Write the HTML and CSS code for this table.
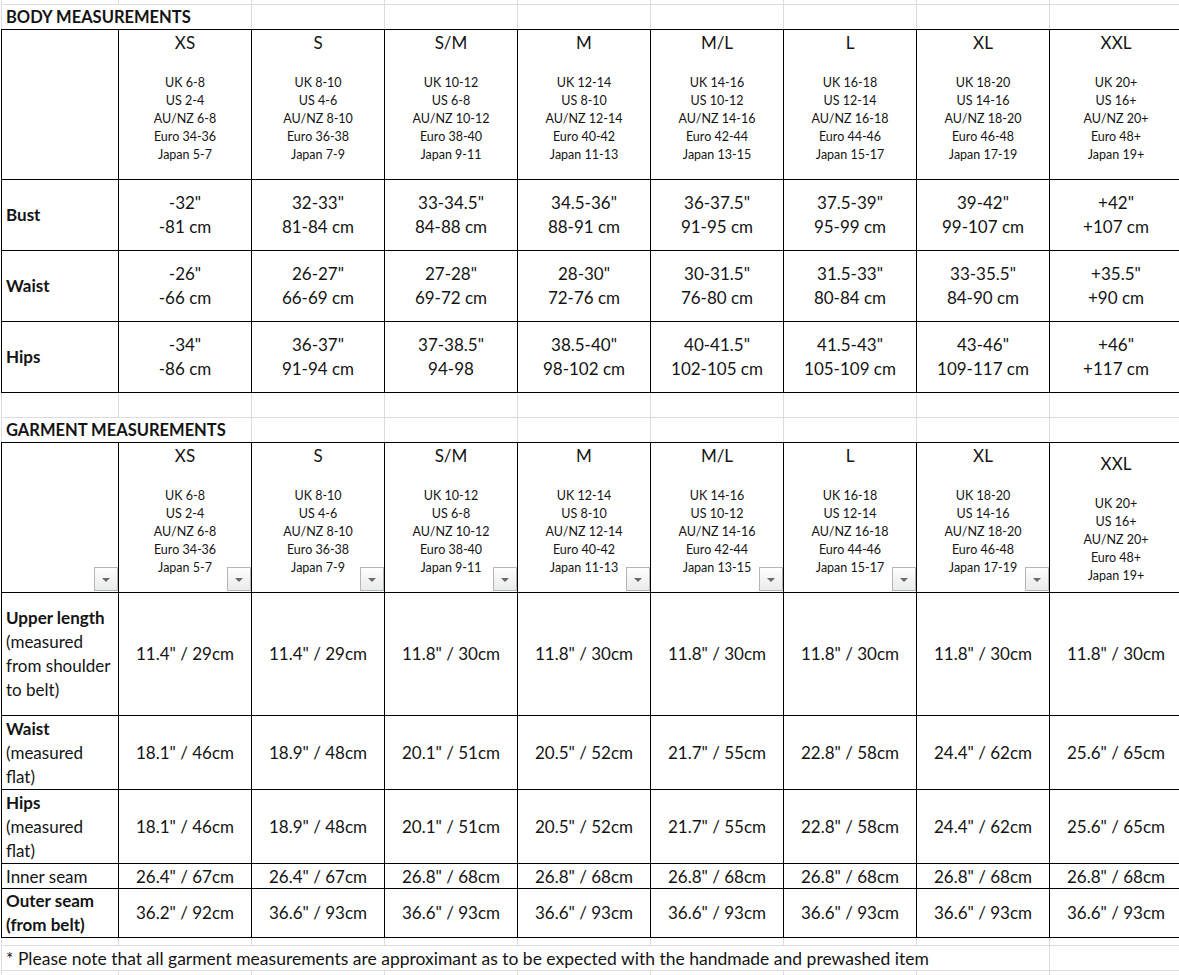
FILE: index.html
```html
<!DOCTYPE html>
<html lang="en">
<head>
<meta charset="utf-8">
<title>Size chart</title>
<link rel="stylesheet" href="styles.css">
</head>
<body>
<div class="sheet">
  <div class="row r-top"><div></div><div></div><div></div><div></div><div></div><div></div><div></div><div></div><div></div></div>
  <div class="row r-title"><div class="title">BODY MEASUREMENTS</div><div></div><div></div><div></div><div></div><div></div><div></div><div></div></div>

  <div class="table">
    <div class="row r-head">
      <div></div>
      <div class="hd"><div class="sz">XS</div><div class="ls">UK 6-8<br>US 2-4<br>AU/NZ 6-8<br>Euro 34-36<br>Japan 5-7</div></div>
      <div class="hd"><div class="sz">S</div><div class="ls">UK 8-10<br>US 4-6<br>AU/NZ 8-10<br>Euro 36-38<br>Japan 7-9</div></div>
      <div class="hd"><div class="sz">S/M</div><div class="ls">UK 10-12<br>US 6-8<br>AU/NZ 10-12<br>Euro 38-40<br>Japan 9-11</div></div>
      <div class="hd"><div class="sz">M</div><div class="ls">UK 12-14<br>US 8-10<br>AU/NZ 12-14<br>Euro 40-42<br>Japan 11-13</div></div>
      <div class="hd"><div class="sz">M/L</div><div class="ls">UK 14-16<br>US 10-12<br>AU/NZ 14-16<br>Euro 42-44<br>Japan 13-15</div></div>
      <div class="hd"><div class="sz">L</div><div class="ls">UK 16-18<br>US 12-14<br>AU/NZ 16-18<br>Euro 44-46<br>Japan 15-17</div></div>
      <div class="hd"><div class="sz">XL</div><div class="ls">UK 18-20<br>US 14-16<br>AU/NZ 18-20<br>Euro 46-48<br>Japan 17-19</div></div>
      <div class="hd"><div class="sz">XXL</div><div class="ls">UK 20+<br>US 16+<br>AU/NZ 20+<br>Euro 48+<br>Japan 19+</div></div>
    </div>
    <div class="row r-body">
      <div class="lb"><b>Bust</b></div>
      <div class="v">-32"<br>-81 cm</div>
      <div class="v">32-33"<br>81-84 cm</div>
      <div class="v">33-34.5"<br>84-88 cm</div>
      <div class="v">34.5-36"<br>88-91 cm</div>
      <div class="v">36-37.5"<br>91-95 cm</div>
      <div class="v">37.5-39"<br>95-99 cm</div>
      <div class="v">39-42"<br>99-107 cm</div>
      <div class="v">+42"<br>+107 cm</div>
    </div>
    <div class="row r-body">
      <div class="lb"><b>Waist</b></div>
      <div class="v">-26"<br>-66 cm</div>
      <div class="v">26-27"<br>66-69 cm</div>
      <div class="v">27-28"<br>69-72 cm</div>
      <div class="v">28-30"<br>72-76 cm</div>
      <div class="v">30-31.5"<br>76-80 cm</div>
      <div class="v">31.5-33"<br>80-84 cm</div>
      <div class="v">33-35.5"<br>84-90 cm</div>
      <div class="v">+35.5"<br>+90 cm</div>
    </div>
    <div class="row r-body">
      <div class="lb"><b>Hips</b></div>
      <div class="v">-34"<br>-86 cm</div>
      <div class="v">36-37"<br>91-94 cm</div>
      <div class="v">37-38.5"<br>94-98</div>
      <div class="v">38.5-40"<br>98-102 cm</div>
      <div class="v">40-41.5"<br>102-105 cm</div>
      <div class="v">41.5-43"<br>105-109 cm</div>
      <div class="v">43-46"<br>109-117 cm</div>
      <div class="v">+46"<br>+117 cm</div>
    </div>
  </div>

  <div class="row r-empty"><div></div><div></div><div></div><div></div><div></div><div></div><div></div><div></div><div></div></div>
  <div class="row r-title"><div class="title">GARMENT MEASUREMENTS</div><div></div><div></div><div></div><div></div><div></div><div></div><div></div></div>

  <div class="table">
    <div class="row r-head">
      <div class="hd"><span class="dd"></span></div>
      <div class="hd"><div class="sz">XS</div><div class="ls">UK 6-8<br>US 2-4<br>AU/NZ 6-8<br>Euro 34-36<br>Japan 5-7</div><span class="dd"></span></div>
      <div class="hd"><div class="sz">S</div><div class="ls">UK 8-10<br>US 4-6<br>AU/NZ 8-10<br>Euro 36-38<br>Japan 7-9</div><span class="dd"></span></div>
      <div class="hd"><div class="sz">S/M</div><div class="ls">UK 10-12<br>US 6-8<br>AU/NZ 10-12<br>Euro 38-40<br>Japan 9-11</div><span class="dd"></span></div>
      <div class="hd"><div class="sz">M</div><div class="ls">UK 12-14<br>US 8-10<br>AU/NZ 12-14<br>Euro 40-42<br>Japan 11-13</div><span class="dd"></span></div>
      <div class="hd"><div class="sz">M/L</div><div class="ls">UK 14-16<br>US 10-12<br>AU/NZ 14-16<br>Euro 42-44<br>Japan 13-15</div><span class="dd"></span></div>
      <div class="hd"><div class="sz">L</div><div class="ls">UK 16-18<br>US 12-14<br>AU/NZ 16-18<br>Euro 44-46<br>Japan 15-17</div><span class="dd"></span></div>
      <div class="hd"><div class="sz">XL</div><div class="ls">UK 18-20<br>US 14-16<br>AU/NZ 18-20<br>Euro 46-48<br>Japan 17-19</div><span class="dd"></span></div>
      <div class="hd hd-low"><div class="sz">XXL</div><div class="ls">UK 20+<br>US 16+<br>AU/NZ 20+<br>Euro 48+<br>Japan 19+</div></div>
    </div>
    <div class="row r-upper">
      <div class="lb"><div><b>Upper length</b><br>(measured<br>from shoulder<br>to belt)</div></div>
      <div class="v">11.4" / 29cm</div>
      <div class="v">11.4" / 29cm</div>
      <div class="v">11.8" / 30cm</div>
      <div class="v">11.8" / 30cm</div>
      <div class="v">11.8" / 30cm</div>
      <div class="v">11.8" / 30cm</div>
      <div class="v">11.8" / 30cm</div>
      <div class="v">11.8" / 30cm</div>
    </div>
    <div class="row r-flat">
      <div class="lb"><div><b>Waist</b><br>(measured<br>flat)</div></div>
      <div class="v">18.1" / 46cm</div>
      <div class="v">18.9" / 48cm</div>
      <div class="v">20.1" / 51cm</div>
      <div class="v">20.5" / 52cm</div>
      <div class="v">21.7" / 55cm</div>
      <div class="v">22.8" / 58cm</div>
      <div class="v">24.4" / 62cm</div>
      <div class="v">25.6" / 65cm</div>
    </div>
    <div class="row r-flat">
      <div class="lb"><div><b>Hips</b><br>(measured<br>flat)</div></div>
      <div class="v">18.1" / 46cm</div>
      <div class="v">18.9" / 48cm</div>
      <div class="v">20.1" / 51cm</div>
      <div class="v">20.5" / 52cm</div>
      <div class="v">21.7" / 55cm</div>
      <div class="v">22.8" / 58cm</div>
      <div class="v">24.4" / 62cm</div>
      <div class="v">25.6" / 65cm</div>
    </div>
    <div class="row r-inner">
      <div class="lb">Inner seam</div>
      <div class="v">26.4" / 67cm</div>
      <div class="v">26.4" / 67cm</div>
      <div class="v">26.8" / 68cm</div>
      <div class="v">26.8" / 68cm</div>
      <div class="v">26.8" / 68cm</div>
      <div class="v">26.8" / 68cm</div>
      <div class="v">26.8" / 68cm</div>
      <div class="v">26.8" / 68cm</div>
    </div>
    <div class="row r-outer">
      <div class="lb"><div><b>Outer seam<br>(from belt)</b></div></div>
      <div class="v">36.2" / 92cm</div>
      <div class="v">36.6" / 93cm</div>
      <div class="v">36.6" / 93cm</div>
      <div class="v">36.6" / 93cm</div>
      <div class="v">36.6" / 93cm</div>
      <div class="v">36.6" / 93cm</div>
      <div class="v">36.6" / 93cm</div>
      <div class="v">36.6" / 93cm</div>
    </div>
  </div>

  <div class="row r-thin"><div></div><div></div><div></div><div></div><div></div><div></div><div></div><div></div><div></div></div>
  <div class="row r-note"><div class="note">* Please note that all garment measurements are approximant as to be expected with the handmade and prewashed item</div><div></div></div>
  <div class="row r-empty"><div></div><div></div><div></div><div></div><div></div><div></div><div></div><div></div><div></div></div>
</div>
</body>
</html>
```

FILE: styles.css
```css
html, body {
  margin: 0;
  padding: 0;
  background: #fff;
  overflow: hidden;
}

body {
  font-family: Lato, "Liberation Sans", sans-serif;
  color: #141414;
}

.sheet {
  width: 1183px;
  padding-left: 1px;
  box-sizing: border-box;
}

.row {
  display: grid;
  grid-template-columns: 117px repeat(8, 133px);
  border-left: 1px solid #dadcdd;
}

.row > div {
  box-sizing: border-box;
  border-right: 1px solid #dadcdd;
  border-bottom: 1px solid #dadcdd;
  min-width: 0;
}

.r-top { height: 5px; }
.r-empty { height: 25px; }
.r-thin { height: 8px; }
.r-note { height: 25px; }

.r-title { height: 24px; }
.r-title > div { border-bottom: 0; }

.title {
  grid-column: span 2;
  font-weight: 700;
  font-size: 16.5px;
  line-height: 23px;
  padding: 1px 0 0 4px;
  white-space: nowrap;
}

.r-note > div:first-child { grid-column: span 8; }

.note {
  font-size: 17.5px;
  line-height: 23px;
  padding: 1px 0 0 4px;
  white-space: nowrap;
}

/* bordered tables */
.table {
  border-top: 1px solid #000;
}

.table .row {
  border-left-color: #000;
}

.table .row > div {
  border-color: #000;
}

.r-head { height: 150px; }
.r-body { height: 71px; }
.r-upper { height: 123px; }
.r-flat { height: 74px; }
.r-inner { height: 25px; }
.r-outer { height: 49px; }

.hd {
  position: relative;
  text-align: center;
  padding-top: 2px;
}

.hd-low { padding-top: 10px; }

.sz {
  font-size: 17px;
  line-height: 22px;
}

.ls {
  margin-top: 20px;
  font-size: 12.5px;
  line-height: 18px;
}

.v {
  display: flex;
  align-items: center;
  justify-content: center;
  text-align: center;
  font-size: 17px;
  line-height: 24px;
  white-space: nowrap;
}

.r-inner .v, .r-inner .lb { line-height: 23px; }

.lb {
  display: flex;
  align-items: center;
  padding-left: 4px;
  font-size: 17px;
  line-height: 24px;
  white-space: nowrap;
}

.lb b { font-weight: 700; }

/* filter dropdown buttons */
.dd {
  position: absolute;
  right: 0;
  bottom: 1px;
  width: 24px;
  height: 24px;
  box-sizing: border-box;
  border: 1px solid #b4b6b8;
  background: linear-gradient(#fefefe, #e9eaeb);
}

.dd::after {
  content: "";
  position: absolute;
  left: 7px;
  top: 10px;
  border-left: 4px solid transparent;
  border-right: 4px solid transparent;
  border-top: 4px solid #6a6a6a;
}
```
